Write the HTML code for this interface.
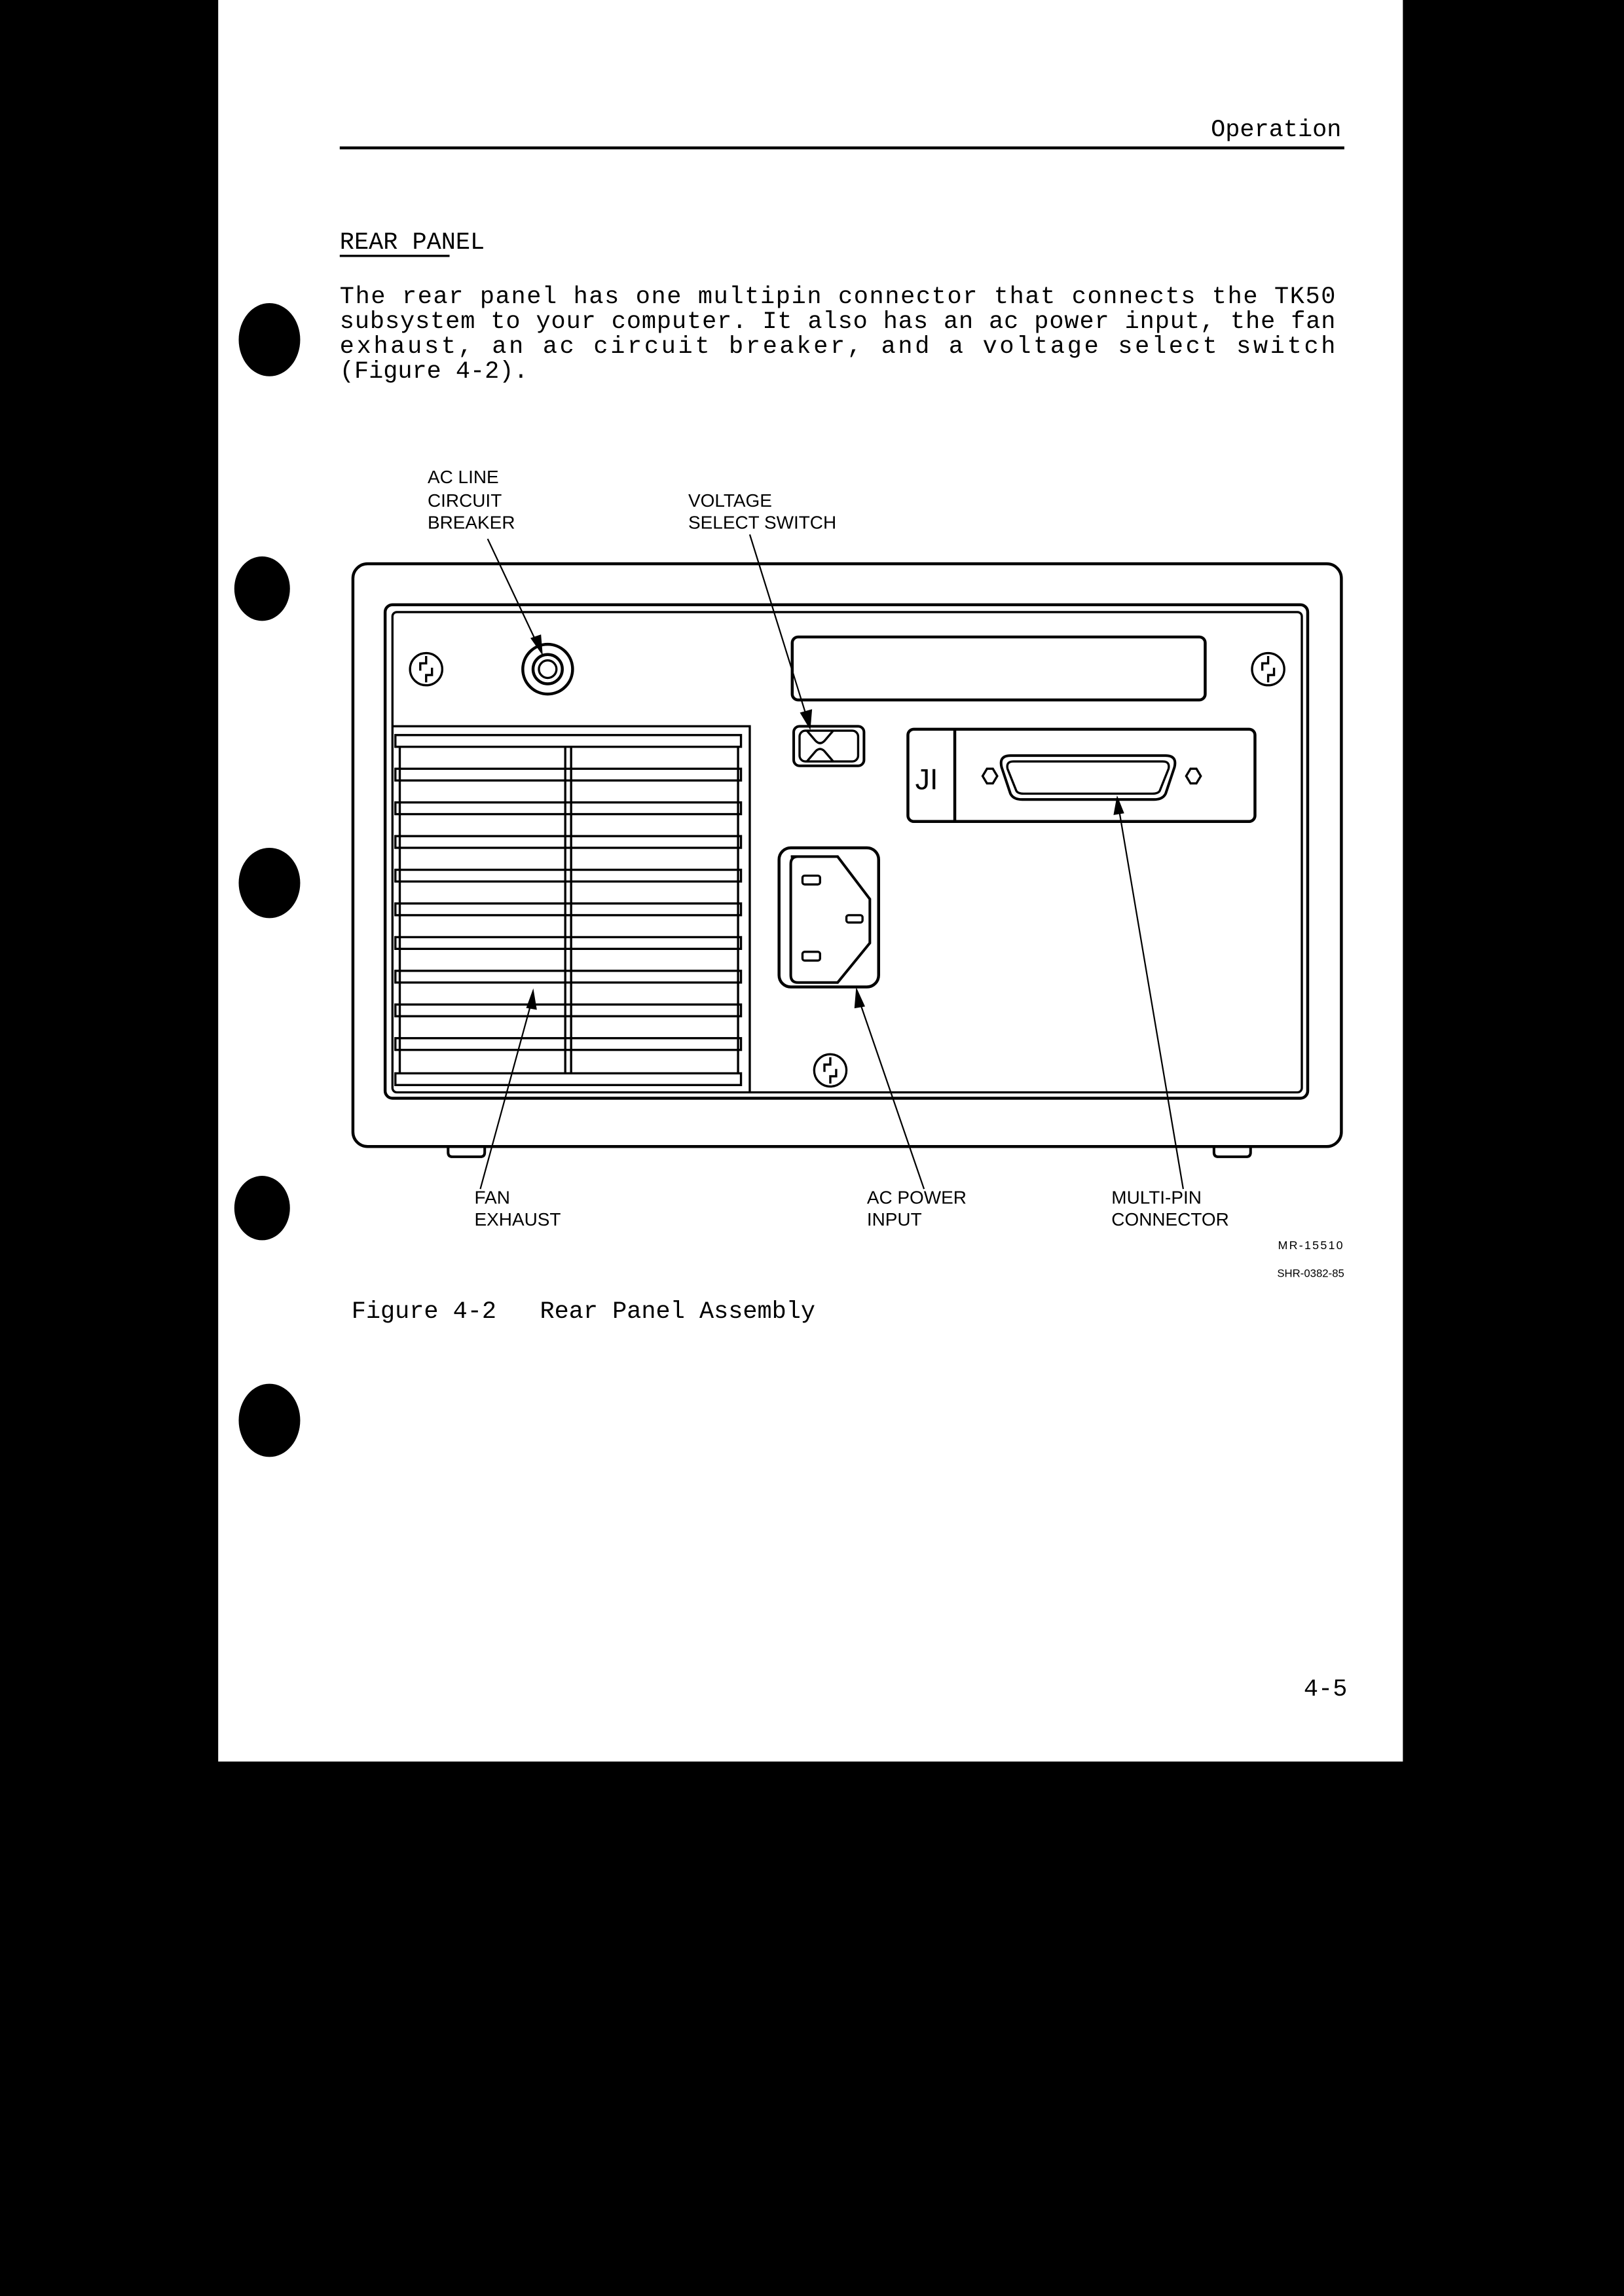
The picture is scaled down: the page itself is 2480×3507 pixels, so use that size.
<!DOCTYPE html>
<html><head><meta charset="utf-8"><style>
html,body{margin:0;padding:0;background:#000;}
svg{display:block;}
.m{font-family:"Liberation Mono",monospace;font-size:16.5px;fill:#000;}
.s{font-family:"Liberation Sans",sans-serif;font-size:12.5px;fill:#000;}
</style></head><body>
<svg width="2480" height="3507" viewBox="0 0 1109 1568" preserveAspectRatio="none" xmlns="http://www.w3.org/2000/svg">
<rect width="1109" height="1568" fill="#000"/>
<rect x="149" y="0" width="809" height="1203" fill="#fff"/>
<g fill="#000">
<ellipse cx="184" cy="232" rx="21" ry="25"/>
<ellipse cx="179" cy="402" rx="19" ry="22"/>
<ellipse cx="184" cy="603" rx="21" ry="24"/>
<ellipse cx="179" cy="825" rx="19" ry="22"/>
<ellipse cx="184" cy="970" rx="21" ry="25"/>
</g>
<text class="m" x="916" y="93" text-anchor="end">Operation</text>
<rect x="232" y="100" width="686" height="2" fill="#000"/>
<text class="m" x="232" y="170">REAR PANEL</text>
<rect x="232" y="174" width="75" height="1.5" fill="#000"/>
<text class="m" x="232" y="207" textLength="680" lengthAdjust="spacing">The  rear  panel has one multipin connector that connects the TK50</text>
<text class="m" x="232" y="224" textLength="680" lengthAdjust="spacing">subsystem to your computer. It also has an ac power input, the fan</text>
<text class="m" x="232" y="241" textLength="680" lengthAdjust="spacing">exhaust,  an  ac  circuit  breaker,  and  a  voltage select switch</text>
<text class="m" x="232" y="258">(Figure 4-2).</text>

<text class="s" x="292" y="330">AC LINE</text>
<text class="s" x="292" y="346">CIRCUIT</text>
<text class="s" x="292" y="361">BREAKER</text>
<text class="s" x="470" y="346">VOLTAGE</text>
<text class="s" x="470" y="361">SELECT SWITCH</text>

<g fill="none" stroke="#000" stroke-width="2">
<rect x="241" y="385" width="675" height="398" rx="10"/>
<rect x="263" y="413" width="630" height="337" rx="5"/>
<rect x="268" y="418" width="621" height="328" rx="3" stroke-width="1.5"/>
<path d="M268 496 H512 V746" stroke-width="1.5"/>
<path d="M306 783 v4 q0 3 3 3 h19 q3 0 3 -3 v-4 M829 783 v4 q0 3 3 3 h19 q3 0 3 -3 v-4" stroke-width="1.8"/>
<circle cx="374" cy="457" r="17"/>
<circle cx="374" cy="457" r="10"/>
<circle cx="374" cy="457" r="6" stroke-width="1.5"/>
<rect x="541" y="435" width="282" height="43" rx="4"/>
<rect x="542" y="496" width="48" height="27" rx="4" stroke-width="1.8"/>
<rect x="546" y="499" width="40" height="21" rx="4" stroke-width="1.5"/>
<path d="M551 499 L557 506 Q560 509 563 506 L569 499 M551 520 L557 513 Q560 510 563 513 L569 520" stroke-width="1.5"/>
<rect x="620" y="498" width="237" height="63" rx="4"/>
<line x1="652" y1="498" x2="652" y2="561"/>
<path d="M690 516 H796 Q804 516 802 524 L796 542 Q794 546 788 546 H698 Q692 546 690 542 L684 524 Q682 516 690 516 Z" stroke-width="1.8"/>
<path d="M692 520 H794 Q799 520 798 525 L792 540 Q791 542 787 542 H699 Q695 542 694 540 L688 525 Q687 520 692 520 Z" stroke-width="1.5"/>
<path d="M674 525 L678 525 L681 530 L678 535 L674 535 L671 530 Z M813 525 L817 525 L820 530 L817 535 L813 535 L810 530 Z" stroke-width="1.5"/>
<rect x="532" y="579" width="68" height="95" rx="8"/>
<path d="M540 585 H572 L594 614 V644 L572 671 H545 Q540 671 540 666 V590 Q540 585 545 585 Z" stroke-width="1.8"/>
<rect x="548" y="598" width="12" height="6" rx="1.5" stroke-width="1.5"/>
<rect x="578" y="625" width="11" height="5" rx="1.5" stroke-width="1.5"/>
<rect x="548" y="650" width="12" height="6" rx="1.5" stroke-width="1.5"/>
</g>
<text x="625" y="539" style="font-family:'Liberation Sans',sans-serif;font-size:20px">JI</text>
<g fill="none" stroke="#000" stroke-width="1.5">
<rect x="270" y="502" width="236" height="8"/>
<rect x="270" y="525" width="236" height="8"/>
<rect x="270" y="548" width="236" height="8"/>
<rect x="270" y="571" width="236" height="8"/>
<rect x="270" y="594" width="236" height="8"/>
<rect x="270" y="617" width="236" height="8"/>
<rect x="270" y="640" width="236" height="8"/>
<rect x="270" y="663" width="236" height="8"/>
<rect x="270" y="686" width="236" height="8"/>
<rect x="270" y="709" width="236" height="8"/>
<rect x="270" y="733" width="236" height="8"/>
<path d="M273 510 V733 M386 510 V733 M390 510 V733 M504 510 V733"/>
</g>
<g fill="none" stroke="#000" stroke-width="1.5">
<circle cx="291" cy="457" r="11"/>
<path d="M291 448 v5 h-4 v5 M291 466 v-5 h4 v-5"/>
<circle cx="866" cy="457" r="11"/>
<path d="M866 448 v5 h-4 v5 M866 466 v-5 h4 v-5"/>
<circle cx="567" cy="731" r="11"/>
<path d="M567 722 v5 h-4 v5 M567 740 v-5 h4 v-5"/>
</g>
<g stroke="#000" stroke-width="1" fill="#000">
<line x1="333" y1="368" x2="367" y2="440"/><path d="M363 436 L370 446 L369 434 Z"/>
<line x1="512" y1="365" x2="551" y2="490"/><path d="M547 487 L553 497 L554 485 Z"/>
<line x1="328" y1="812" x2="363" y2="684"/><path d="M360 688 L364 677 L366 689 Z"/>
<line x1="631" y1="812" x2="587" y2="684"/><path d="M584 688 L585 676 L590 687 Z"/>
<line x1="808" y1="812" x2="764" y2="552"/><path d="M761 556 L763 545 L767 555 Z"/>
</g>

<text class="s" x="324" y="822">FAN</text>
<text class="s" x="324" y="837">EXHAUST</text>
<text class="s" x="592" y="822">AC POWER</text>
<text class="s" x="592" y="837">INPUT</text>
<text class="s" x="759" y="822">MULTI-PIN</text>
<text class="s" x="759" y="837">CONNECTOR</text>
<text class="s" x="918" y="853" text-anchor="end" style="font-size:8px;letter-spacing:1px">MR-15510</text>
<text class="s" x="918" y="872" text-anchor="end" style="font-size:7.5px">SHR-0382-85</text>
<text class="m" x="240" y="900" xml:space="preserve">Figure 4-2   Rear Panel Assembly</text>
<text class="m" x="920" y="1158" text-anchor="end">4-5</text>
</svg>
</body></html>
